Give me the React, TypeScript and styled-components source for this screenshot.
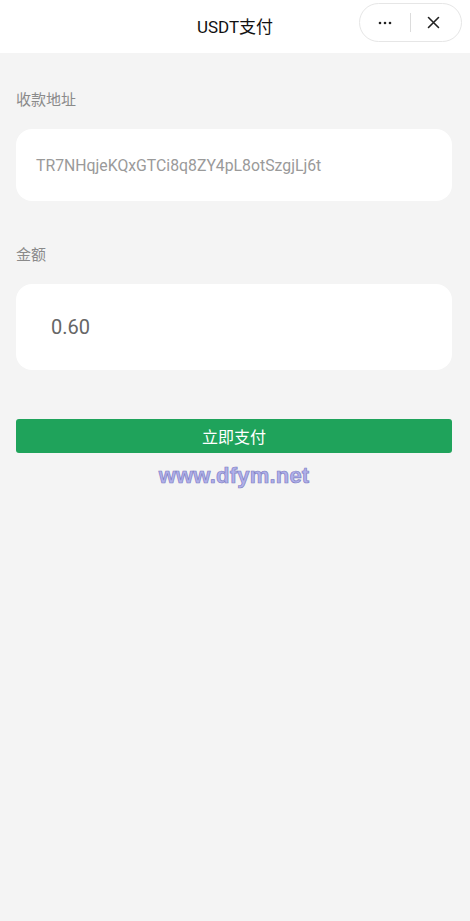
import React from 'react';
import styled, { createGlobalStyle } from 'styled-components';

const GlobalStyle = createGlobalStyle`
  html, body {
    margin: 0;
    padding: 0;
    background-color: #f4f4f4;
    font-family: Roboto, "Noto Sans CJK SC", sans-serif;
  }
  * {
    box-sizing: border-box;
  }
`;

const Page = styled.div`
  min-height: 921px;
  background-color: #f4f4f4;
`;

const NavBar = styled.header`
  height: 53px;
  background-color: #ffffff;
  display: flex;
  align-items: center;
  justify-content: center;
  position: relative;
`;

const NavTitle = styled.h1`
  margin: 0;
  font-size: 17px;
  font-weight: 400;
  color: #111111;
  padding-bottom: 3px;
`;

const Capsule = styled.div`
  position: absolute;
  top: 3px;
  right: 8px;
  width: 103px;
  height: 39px;
  border: 1px solid #e6e6e6;
  border-radius: 20px;
  display: flex;
  align-items: center;
  background-color: #ffffff;
`;

const CapsuleButton = styled.div`
  flex: 1;
  display: flex;
  align-items: center;
  justify-content: center;
  height: 100%;
`;

const CapsuleDivider = styled.div`
  width: 1px;
  height: 19px;
  background-color: #dcdcdc;
`;

const Content = styled.main`
  padding: 0 18px 0 16px;
  display: flex;
  flex-direction: column;
`;

const FieldLabel = styled.div<{ $top: number }>`
  font-size: 15px;
  color: #8a8a8a;
  line-height: 20px;
  margin-top: ${(p) => p.$top}px;
`;

const FieldBox = styled.div<{ $height: number; $indent: number; $size: number; $color: string }>`
  margin-top: 19px;
  height: ${(p) => p.$height}px;
  background-color: #ffffff;
  border-radius: 16px;
  display: flex;
  align-items: center;
  padding-left: ${(p) => p.$indent}px;
  font-size: ${(p) => p.$size}px;
  color: ${(p) => p.$color};
`;

const PayButton = styled.button`
  margin-top: 49px;
  height: 34px;
  width: 100%;
  border: none;
  border-radius: 3px;
  background-color: #1fa35b;
  color: #ffffff;
  font-family: "Noto Sans CJK SC", sans-serif;
  font-size: 16px;
  padding: 0;
`;

const Watermark = styled.div`
  margin-top: 10px;
  text-align: center;
  font-family: "Liberation Sans", Arial, sans-serif;
  font-weight: 700;
  font-size: 22px;
  color: #b0b0ea;
  -webkit-text-stroke: 0.7px #7f7fc4;
  letter-spacing: 0.2px;
`;

export default function App() {
  return (
    <Page>
      <GlobalStyle />
      <NavBar>
        <NavTitle>USDT支付</NavTitle>
        <Capsule>
          <CapsuleButton>
            <svg width="16" height="4" viewBox="0 0 16 4">
              <circle cx="3" cy="2" r="1.3" fill="#222" />
              <circle cx="8" cy="2" r="1.3" fill="#222" />
              <circle cx="13" cy="2" r="1.3" fill="#222" />
            </svg>
          </CapsuleButton>
          <CapsuleDivider />
          <CapsuleButton>
            <svg width="13" height="13" viewBox="0 0 13 13" style={{ marginRight: 5 }}>
              <path d="M1.5 1.5 L11.5 11.5 M11.5 1.5 L1.5 11.5" stroke="#222" strokeWidth="1.6" strokeLinecap="round" />
            </svg>
          </CapsuleButton>
        </Capsule>
      </NavBar>
      <Content>
        <FieldLabel $top={37}>收款地址</FieldLabel>
        <FieldBox $height={72} $indent={20} $size={15.8} $color="#9a9a9a">
          TR7NHqjeKQxGTCi8q8ZY4pL8otSzgjLj6t
        </FieldBox>
        <FieldLabel $top={44}>金额</FieldLabel>
        <FieldBox $height={86} $indent={35} $size={20} $color="#666666">
          0.60
        </FieldBox>
        <PayButton>立即支付</PayButton>
        <Watermark>www.dfym.net</Watermark>
      </Content>
    </Page>
  );
}
